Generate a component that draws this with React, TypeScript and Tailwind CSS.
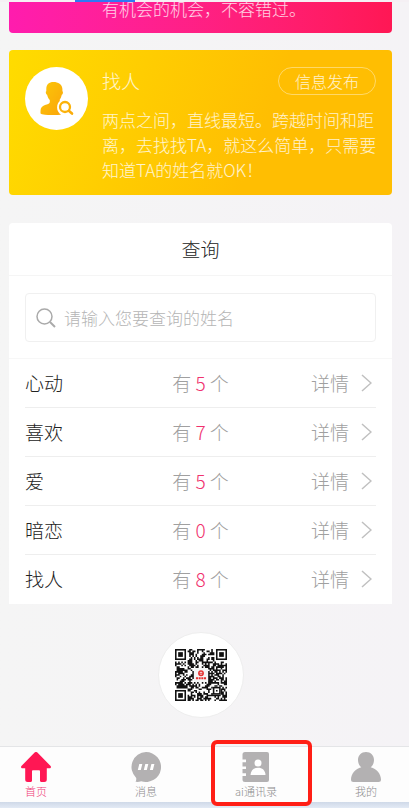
import { useState } from "react";
import type { ReactNode } from "react";

const STATS = [
  { name: "心动", count: 5 },
  { name: "喜欢", count: 7 },
  { name: "爱", count: 5 },
  { name: "暗恋", count: 0 },
  { name: "找人", count: 8 },
];

const QR_SIZE = 33;

function isFinder(x: number, y: number) {
  const far = QR_SIZE - 8;
  return (x < 8 && y < 8) || (x >= far && y < 8) || (x < 8 && y >= far);
}

function buildModules() {
  let seed = 20177;
  let d = "";
  for (let y = 0; y < QR_SIZE; y++) {
    for (let x = 0; x < QR_SIZE; x++) {
      seed = (seed * 1103515245 + 12345) % 2147483648;
      const inLogo = x > 11 && x < 21 && y > 11 && y < 21;
      const inAlign = x > 23 && x < 29 && y > 23 && y < 29;
      if (!isFinder(x, y) && !inLogo && !inAlign && seed / 2147483648 > 0.42) {
        d += `M${x} ${y}h1v1h-1z`;
      }
    }
  }
  return d;
}

const QR_MODULES = buildModules();

function QrCode() {
  return (
    <svg viewBox="0 0 33 33" className="w-[52px] h-[52px]" role="img" aria-label="二维码">
      <path d={QR_MODULES} fill="#111" />
      {[
        [0, 0],
        [26, 0],
        [0, 26],
      ].map(([x, y]) => (
        <g key={`${x}-${y}`}>
          <rect x={x + 0.5} y={y + 0.5} width="6" height="6" fill="#fff" stroke="#111" />
          <rect x={x + 2} y={y + 2} width="3" height="3" fill="#111" />
        </g>
      ))}
      <rect x="24.5" y="24.5" width="4" height="4" fill="#fff" stroke="#111" />
      <rect x="26" y="26" width="1" height="1" fill="#111" />
      <rect x="12" y="12" width="9" height="9" rx="1" fill="#f4f6f6" />
      <circle cx="16.5" cy="15.4" r="1.4" fill="none" stroke="#e5302f" strokeWidth="0.9" />
      <path d="M15.1 15.4h2.8" stroke="#e5302f" strokeWidth="0.6" />
      <path d="M13.3 18.5h6.4" stroke="#e5302f" strokeWidth="1.3" strokeDasharray="1.3 .4" />
    </svg>
  );
}

function FindPersonIcon() {
  return (
    <svg viewBox="0 0 34 34" className="w-[34px] h-[34px]" aria-hidden="true">
      <defs>
        <linearGradient id="person" x1="0" y1="0" x2="1" y2="1">
          <stop offset="0" stopColor="#fbc808" />
          <stop offset="1" stopColor="#fba50a" />
        </linearGradient>
      </defs>
      <path
        d="M13.500 0C9 0 6.300 2.600 6.300 7v2.300c-.5.200-.6.800-.4 1.600.2 1 .6 1.600 1.200 1.900.5 2.200 1.400 3.900 2.700 5.200v2.200c-.4 1.400-2.300 2-4.800 2.900C2 24.200.5 25.800.5 29v2c0 .8.600 1.100 1.500 1.200 4 .6 8 .9 11.500.9 2.800 0 5.200-.1 7.500-.4-2.400-1.600-3.900-4.200-3.900-7.200 0-2.600 1-4.800 2.700-6.400-.1-.6 0-1.100-.1-1.400 1-1.300 1.700-2.900 2.100-4.900.6-.3 1-.9 1.100-1.900.1-.8 0-1.400-.5-1.600V7C22.400 2.600 18 0 13.500 0z"
        fill="url(#person)"
      />
      <circle cx="25" cy="25" r="5" fill="none" stroke="#fbb20a" strokeWidth="2.300" />
      <path d="M28.800 28.800L32 31.600" stroke="#fbac0a" strokeWidth="2.600" strokeLinecap="round" />
    </svg>
  );
}

function HomeIcon() {
  return (
    <svg viewBox="0 0 30 30" className="w-[30px] h-[30px]" fill="#ff1754" aria-hidden="true">
      <path d="M13.600.600a2 2 0 0 1 2.800 0L29.600 14c.8 1 .2 2.200-1.200 2.200h-2.600v11.300c0 1.700-.9 2.500-2.500 2.500h-3.100c-.7 0-1.200-.5-1.200-1.200V19.500c0-.9-.4-1.300-1.200-1.300h-5.600c-.8 0-1.200.4-1.200 1.300v9.300c0 .7-.5 1.200-1.200 1.200H6.700c-1.600 0-2.500-.8-2.500-2.500V16.200H1.600C.2 16.200-.4 15 .4 14z" />
    </svg>
  );
}

function MessageIcon() {
  return (
    <svg viewBox="0 0 30 30" className="w-[30px] h-[30px]" aria-hidden="true">
      <path
        d="M15 0a15 15 0 1 1-4.800 29.200c-1.700.6-3.500.8-5.600.6.600-1.200.8-2.600.6-3.900A15 15 0 0 1 15 0z"
        fill="#b3b1b2"
      />
      <path d="M8.300 12h3l-1.500 6h-3zM14.300 12h3l-1.500 6h-3zM20.400 12h3l-1.500 6h-3z" fill="#fff" />
    </svg>
  );
}

function ContactsIcon() {
  return (
    <svg viewBox="0 0 30 30" className="w-[30px] h-[30px]" aria-hidden="true">
      <path
        d="M4 0h22a2 2 0 0 1 2 2v26a2 2 0 0 1-2 2H4a2.500 2.500 0 0 1-2.500-2.500V24H5v-2.700H1.500v-4.200H5v-2.700H1.500v-4.200H5V7.500H1.500v-5A2.500 2.500 0 0 1 4 0z"
        fill="#b3b1b2"
      />
      <circle cx="17" cy="11" r="3.500" fill="#fff" />
      <path d="M9.500 23c.2-4.800 3.200-7.300 7.500-7.300s7.300 2.500 7.500 7.300z" fill="#fff" />
    </svg>
  );
}

function ProfileIcon() {
  return (
    <svg viewBox="0 0 30 30" className="w-[30px] h-[30px]" fill="#b3b1b2" aria-hidden="true">
      <path d="M15 0c4.700 0 8 3.300 8 8 0 3-1.200 5.600-3.300 7.200 5.800 1.600 10.300 6.600 10.300 12.300 0 1.700-.8 2.500-2.500 2.500h-25C.8 30 0 29.200 0 27.500c0-5.700 4.500-10.700 10.300-12.300C8.200 13.600 7 11 7 8c0-4.700 3.300-8 8-8z" />
    </svg>
  );
}

const TABS: { label: string; icon: ReactNode; active?: boolean; marked?: boolean }[] = [
  { label: "首页", icon: <HomeIcon />, active: true },
  { label: "消息", icon: <MessageIcon /> },
  { label: "ai通讯录", icon: <ContactsIcon />, marked: true },
  { label: "我的", icon: <ProfileIcon /> },
];

function SearchBox() {
  const [keyword, setKeyword] = useState("");
  return (
    <label className="mx-4 mt-[17px] mb-4 h-[49px] flex items-center gap-2 px-[10px] border border-[#f0f0f0] rounded">
      <svg viewBox="0 0 20 20" className="w-5 h-5 shrink-0" fill="none" stroke="#aaa" strokeWidth="1.500" aria-hidden="true">
        <circle cx="8.500" cy="8.500" r="7.500" />
        <path d="M14 14l5 5" strokeWidth="2" />
      </svg>
      <input
        type="search"
        aria-label="姓名"
        value={keyword}
        onChange={(e) => setKeyword(e.target.value)}
        placeholder="请输入您要查询的姓名"
        className="min-w-0 flex-1 text-[17px] leading-6 text-[#333] placeholder:text-[#b5b5b5] outline-none"
      />
    </label>
  );
}

export default function App() {
  return (
    <div className="min-h-screen flex flex-col bg-linear-to-r from-[#f5f5f5] to-[#f5f3f6] font-['Noto_Sans_CJK_SC',sans-serif] font-light">
      <div className="h-[2px] flex bg-[#f5f0f4]">
        <div className="ml-[75px] w-[60px] bg-[#2d78f4]" />
      </div>

      <main className="pl-[9px] pr-[17px] flex flex-col">
        <section className="h-[31px] overflow-hidden flex items-end rounded-b bg-linear-to-r from-[#ff1cae] to-[#ff1754] pl-[93px] pb-3">
          <p className="text-[17px] leading-[25px] text-white/80">有机会的机会，不容错过。</p>
        </section>

        <section className="mt-[17px] flex items-start gap-[14px] rounded bg-linear-[110deg] from-[#ffdc00] to-[#ffbe02] to-65% px-4 pt-[17px] pb-[13px]">
          <div className="w-[63px] h-[63px] shrink-0 rounded-full bg-white flex items-center justify-center">
            <FindPersonIcon />
          </div>
          <div className="min-w-0 flex-1">
            <div className="flex items-center justify-between">
              <h2 className="text-[19px] leading-7 text-white/80">找人</h2>
              <button className="h-7 px-4 rounded-full border border-white/40 text-[16px] leading-6 text-white/80">
                信息发布
              </button>
            </div>
            <p className="mt-3 -mr-1 text-[17px] leading-[25px] text-white/80">
              两点之间，直线最短。跨越时间和距离，去找找TA，就这么简单，只需要知道TA的姓名就OK！
            </p>
          </div>
        </section>

        <section className="mt-7 rounded-t bg-white">
          <h2 className="h-[53px] flex items-center justify-center border-b border-[#f5f5f5] text-[19px] text-[#222]">
            查询
          </h2>
          <SearchBox />
          <ul className="px-4 border-t border-[#f7f7f7]">
            {STATS.map((s) => (
              <li key={s.name} className="border-b border-[#eee] last:border-transparent">
                <a href="#" className="h-12 grid grid-cols-3 items-center text-[19px] text-[#a0a0a0]">
                  <span className="text-[#222]">{s.name}</span>
                  <span className="text-center">
                    有 <span className="text-[#f0326e]">{s.count}</span> 个
                  </span>
                  <span className="flex items-center justify-end gap-3 pr-1">
                    详情
                    <svg viewBox="0 0 11 18" className="w-[11px] h-[18px]" fill="none" stroke="#c0c0c0" strokeWidth="1.500" aria-hidden="true">
                      <path d="M1 1l9 8-9 8" />
                    </svg>
                  </span>
                </a>
              </li>
            ))}
          </ul>
        </section>

        <div className="mt-7 self-center w-[86px] h-[86px] rounded-full bg-white border border-[#eee] flex items-center justify-center">
          <QrCode />
        </div>
      </main>

      <nav className="mt-auto flex justify-between border-t border-[#e4e5e7] bg-[#fdfdfd] pl-[14px] pr-[21px] pt-[5px] pb-[2px]">
        {TABS.map((t) => (
          <a
            key={t.label}
            href="#"
            className={`relative w-11 flex flex-col items-center text-[11px] leading-[18px] whitespace-nowrap ${
              t.active ? "text-[#f03c78]" : "text-[#8c8c8c]"
            }`}
          >
            {t.icon}
            {t.label}
            {t.marked && (
              <span className="absolute -left-[23px] -right-[34px] -top-3 -bottom-[6px] rounded-md border-4 border-[#ff1f16]" />
            )}
          </a>
        ))}
      </nav>
      <div className="h-[6px] bg-linear-to-b from-[#cfd9e8] to-[#e3eaf5]" />
    </div>
  );
}
